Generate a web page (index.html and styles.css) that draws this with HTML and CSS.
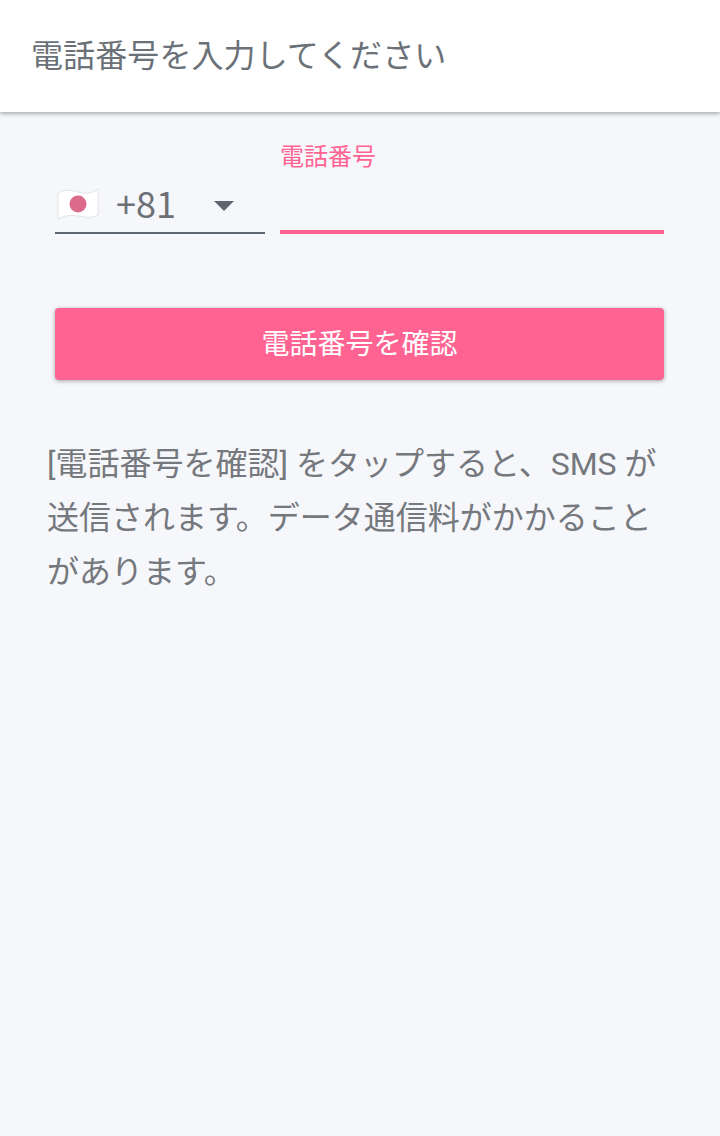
FILE: index.html

```html
<!DOCTYPE html>
<html lang="ja">
<head>
<meta charset="utf-8">
<title>電話番号を入力してください</title>
<link rel="stylesheet" href="styles.css">
</head>
<body>
<header class="top-bar">電話番号を入力してください</header>
<main class="content">
	<div class="phone-row">
		<div class="country">
			<svg class="flag" width="42" height="32" viewBox="0 0 42 32">
				<path d="M1 5C8 1 14 2 21 4S34 6 41 1V27C34 31 28 29 21 28S8 27 1 31Z" fill="#fff" stroke="#e3e4e6" stroke-width="1"/>
				<circle cx="21" cy="16" r="8.5" fill="#dc6b8b"/>
			</svg>
			<span class="code">+81</span>
			<span class="arrow"></span>
		</div>
		<div class="number">
			<label class="number-label">電話番号</label>
			<div class="number-line"></div>
		</div>
	</div>
	<button class="confirm">電話番号を確認</button>
	<p class="note">[電話番号を確認] をタップすると、SMS が送信されます。データ通信料がかかることがあります。</p>
</main>
</body>
</html>
```

FILE: styles.css

```css
* {margin:0; padding:0; box-sizing:border-box;}
html,body {height:100%;}
body {background:#f6f7fb; font-family:"Roboto","Noto Sans CJK JP",sans-serif; color:#75787d;}

.top-bar {height:112px; padding-left:31px; background:#fff; font-size:32px; letter-spacing:0.1px; line-height:112px; color:#6b7178; box-shadow:0 2px 4px rgba(0,0,0,0.3);}

.content {padding:0 56px 0 47px;}

.phone-row {display:flex; align-items:flex-end; gap:15px; height:122px; margin-left:8px;}
.country {display:flex; align-items:center; width:210px; height:56px; padding-left:2px; border-bottom:2px solid #5f6670;}
.flag {margin:0 17px 2px 0;}
.code {margin-bottom:6px; font-family:"Noto Sans CJK JP",sans-serif; font-size:36px; line-height:48px; color:#6d7176;}
.arrow {width:0; height:0; margin:2px 0 0 38px; border-left:10px solid transparent; border-right:10px solid transparent; border-top:10px solid #5f6670;}

.number {flex:1; height:93px;}
.number-label {display:block; height:89px; font-size:24px; line-height:32px; color:#ff6392;}
.number-line {height:4px; background:#ff6392;}

.confirm {display:block; width:609px; height:72px; margin:74px 0 0 8px; padding-bottom:4px; border:0; border-radius:4px; background:#ff6392; color:#fff; font-family:inherit; font-size:28px; box-shadow:0 1px 4px rgba(0,0,0,0.35);}

.note {margin-top:57px; font-size:32px; line-height:54px;}
```
